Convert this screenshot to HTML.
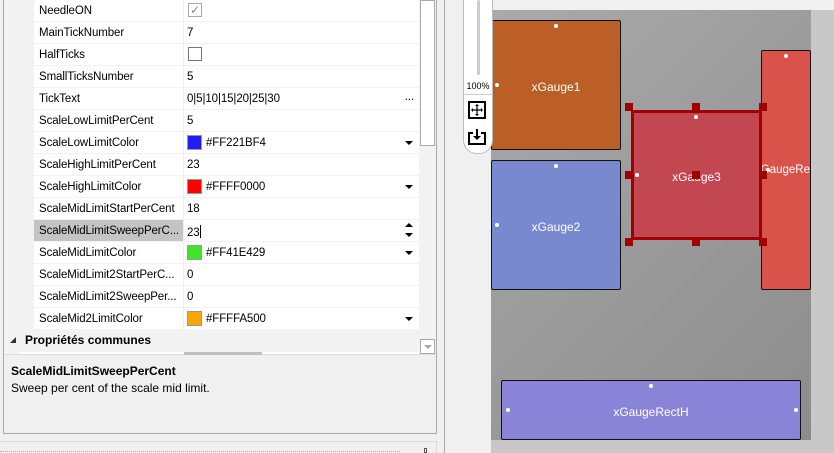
<!DOCTYPE html>
<html><head><meta charset="utf-8"><style>
*{margin:0;padding:0;box-sizing:border-box}
body{width:834px;height:453px;overflow:hidden;background:#f0f0f0;font-family:"Liberation Sans",sans-serif;font-size:12px;color:#000;position:relative}
.a{position:absolute}
.row{position:absolute;left:34px;width:385px;height:21px;background:#fff;font-size:11.5px;letter-spacing:-0.1px}
.row .n{position:absolute;left:5px;top:5px;white-space:nowrap;width:145px;overflow:hidden}
.row .v{position:absolute;left:153px;top:5px;white-space:nowrap}
.row .sep{position:absolute;left:149px;top:0;width:1px;height:21px;background:#f0f0f0}
.sw{position:absolute;left:153px;top:3px;width:15px;height:15px;border:1px solid #999}
.dd{position:absolute;right:6px;top:9px;width:0;height:0;border-left:4px solid transparent;border-right:4px solid transparent;border-top:4px solid #000}
.g{position:absolute;border:1px solid #111;border-radius:2px;color:#fff;font-size:12px;display:flex;align-items:center;justify-content:center;white-space:nowrap;padding-top:3px}
.dot{position:absolute;width:4px;height:4px;border-radius:2px;background:#fff}
.h{position:absolute;width:8px;height:8px;background:#a00000}
</style></head><body>
<div class="a" style="left:3px;top:0;width:434px;height:434px;border:1px solid #aaa;border-top:none;background:#f2f2f2"></div>
<div class="a" style="left:3px;top:355px;width:434px;height:79px;border:1px solid #aaa;border-top:none;background:#f0f0f0"></div>
<div class="a" style="left:4px;top:354px;width:432px;height:1px;background:#ddd"></div>
<div class="a" style="left:444px;top:0;width:1px;height:453px;background:#aaa"></div>
<div class="a" style="left:0;top:441px;width:437px;height:1px;background:#d8d8d8"></div>
<div class="a" style="left:436px;top:441px;width:1px;height:12px;background:#d8d8d8"></div>
<div class="a" style="left:0;top:451px;width:400px;height:1px;border-top:1px dotted #aaa"></div>
<div class="a" style="left:424px;top:448px;width:3px;height:5px;border:1px solid #555"></div>

<div class="row" style="top:0"><span class="n">NeedleON</span><div class="sep"></div><div class="a" style="left:154px;top:3px;width:14px;height:14px;border:1px solid #aaa;color:#888;font-size:12px;line-height:12px;text-align:center">✓</div></div>
<div class="row" style="top:22px"><span class="n">MainTickNumber</span><div class="sep"></div><span class="v">7</span></div>
<div class="row" style="top:44px"><span class="n">HalfTicks</span><div class="sep"></div><div class="a" style="left:154px;top:3px;width:14px;height:14px;border:1px solid #777"></div></div>
<div class="row" style="top:66px"><span class="n">SmallTicksNumber</span><div class="sep"></div><span class="v">5</span></div>
<div class="row" style="top:88px"><span class="n">TickText</span><div class="sep"></div><span class="v">0|5|10|15|20|25|30</span><span class="a" style="right:5px;top:3px">...</span></div>
<div class="row" style="top:110px"><span class="n">ScaleLowLimitPerCent</span><div class="sep"></div><span class="v">5</span></div>
<div class="row" style="top:132px"><span class="n">ScaleLowLimitColor</span><div class="sep"></div><div class="sw" style="background:#221bf4"></div><span class="v" style="left:172px">#FF221BF4</span><div class="dd"></div></div>
<div class="row" style="top:154px"><span class="n">ScaleHighLimitPerCent</span><div class="sep"></div><span class="v">23</span></div>
<div class="row" style="top:176px"><span class="n">ScaleHighLimitColor</span><div class="sep"></div><div class="sw" style="background:#ff0000"></div><span class="v" style="left:172px">#FFFF0000</span><div class="dd"></div></div>
<div class="row" style="top:198px"><span class="n">ScaleMidLimitStartPerCent</span><div class="sep"></div><span class="v">18</span></div>
<div class="row" style="top:220px"><div class="a" style="left:0;top:0;width:149px;height:21px;background:#c4c4c4"></div><span class="n">ScaleMidLimitSweepPerC...</span><div class="sep"></div><span class="v">23<span style="display:inline-block;width:1px;height:13px;background:#000;vertical-align:-2px"></span></span>
<div class="a" style="right:6px;top:3px;border-left:4px solid transparent;border-right:4px solid transparent;border-bottom:4px solid #000"></div><div class="a" style="right:6px;top:13px;border-left:4px solid transparent;border-right:4px solid transparent;border-top:4px solid #000"></div></div>
<div class="row" style="top:242px"><span class="n">ScaleMidLimitColor</span><div class="sep"></div><div class="sw" style="background:#41e429"></div><span class="v" style="left:172px">#FF41E429</span><div class="dd"></div></div>
<div class="row" style="top:264px"><span class="n">ScaleMidLimit2StartPerC...</span><div class="sep"></div><span class="v">0</span></div>
<div class="row" style="top:286px"><span class="n">ScaleMidLimit2SweepPer...</span><div class="sep"></div><span class="v">0</span></div>
<div class="row" style="top:308px"><span class="n">ScaleMid2LimitColor</span><div class="sep"></div><div class="sw" style="background:#ffa500"></div><span class="v" style="left:172px">#FFFFA500</span><div class="dd"></div></div>

<div class="a" style="left:10px;top:337px;border-left:6px solid transparent;border-bottom:6px solid #333"></div>
<div class="a" style="left:25px;top:333px;font-weight:bold">Propriétés communes</div>
<div class="a" style="left:20px;top:352px;width:399px;height:2px;background:#fff"></div>
<div class="a" style="left:184px;top:352px;width:78px;height:3px;background:#c0c0c0"></div>
<div class="a" style="left:420px;top:0;width:15px;height:146px;background:#fff;border:1px solid #aaa"></div>
<div class="a" style="left:420px;top:339px;width:15px;height:15px;background:#fff;border:1px solid #aaa"></div>
<div class="a" style="left:424px;top:345px;border-left:4px solid transparent;border-right:4px solid transparent;border-top:4px solid #aaa"></div>

<div class="a" style="left:11px;top:364px;font-weight:bold">ScaleMidLimitSweepPerCent</div>
<div class="a" style="left:11px;top:381px">Sweep per cent of the scale mid limit.</div>

<div class="a" style="left:491px;top:10px;width:343px;height:443px;background:#c8c8c8"></div>
<div class="a" style="left:491px;top:10px;width:320px;height:430px;background:linear-gradient(135deg,#aaa,#8c8c8c)"></div>

<div class="g" style="left:491px;top:20px;width:130px;height:130px;background:#bb5f27">xGauge1</div>
<div class="dot" style="left:554px;top:24px"></div><div class="dot" style="left:495px;top:83px"></div>
<div class="g" style="left:491px;top:160px;width:130px;height:130px;background:#7889d0">xGauge2</div>
<div class="dot" style="left:554px;top:164px"></div><div class="dot" style="left:495px;top:223px"></div>
<div class="g" style="left:761px;top:50px;width:50px;height:240px;background:#d9534a;overflow:hidden;justify-content:flex-start;padding-top:0"><span style="margin-left:-7px;font-size:11.5px">xGaugeRect</span></div>
<div class="dot" style="left:784px;top:54px"></div>
<div class="g" style="left:501px;top:380px;width:300px;height:60px;background:#8a84d8">xGaugeRectH</div>
<div class="dot" style="left:649px;top:384px"></div><div class="dot" style="left:506px;top:408px"></div><div class="dot" style="left:794px;top:408px"></div>

<div class="a" style="left:631px;top:110px;width:131px;height:130px;background:#c34750;border:3px solid #a00000;color:#fff;display:flex;align-items:center;justify-content:center;padding-top:3px">xGauge3</div>
<div class="dot" style="left:694px;top:115px"></div><div class="dot" style="left:635px;top:173px"></div><div class="dot" style="left:766px;top:168px"></div>
<div class="h" style="left:625px;top:103px"></div><div class="h" style="left:692px;top:103px"></div><div class="h" style="left:759px;top:103px"></div>
<div class="h" style="left:625px;top:171px"></div><div class="h" style="left:692px;top:171px"></div><div class="h" style="left:759px;top:171px"></div>
<div class="h" style="left:625px;top:238px"></div><div class="h" style="left:692px;top:238px"></div><div class="h" style="left:759px;top:238px"></div>

<div class="a" style="left:463px;top:-10px;width:30px;height:164px;background:#fff;border:1px solid #bbb;border-radius:0 0 14px 14px"></div>
<div class="a" style="left:477px;top:0;width:3px;height:75px;background:#ccc;border-radius:2px"></div>
<div class="a" style="left:464px;top:81px;width:28px;text-align:center;font-size:9px;color:#000">100%</div>
<div class="a" style="left:464px;top:94px;width:28px;height:1px;background:#ccc"></div>
<svg class="a" style="left:468px;top:101px" width="18" height="18" viewBox="0 0 18 18"><rect x="1" y="1" width="16" height="16" fill="none" stroke="#000" stroke-width="2"/><path d="M9 4V14M4 9H14" stroke="#000" stroke-width="1.2"/><path d="M9 3l-2 2h4zM9 15l-2-2h4zM3 9l2-2v4zM15 9l-2-2v4z" fill="#000"/></svg>
<svg class="a" style="left:468px;top:127px" width="18" height="18" viewBox="0 0 18 18"><path d="M5 6H1V17H17V6H13" fill="none" stroke="#000" stroke-width="2"/><path d="M9 2V12" stroke="#000" stroke-width="2"/><path d="M5 9L9 13L13 9z" fill="#000"/></svg>
</body></html>
